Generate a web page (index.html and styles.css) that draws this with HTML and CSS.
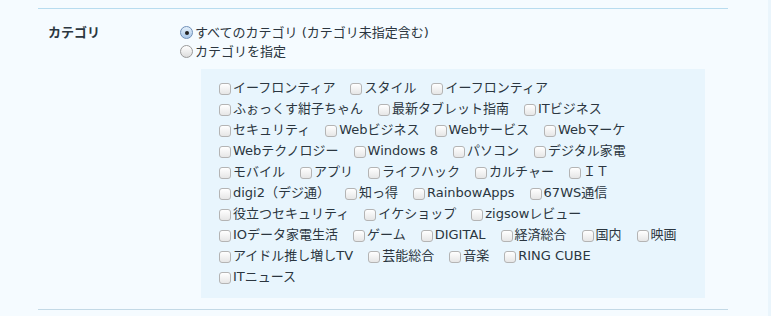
FILE: index.html
```html
<!DOCTYPE html>
<html lang="ja">
<head>
    <meta charset="UTF-8">
    <title>カテゴリ</title>
    <link rel="stylesheet" href="styles.css">
</head>
<body>
    <div class="page">
        <div class="section">
            <div class="section-label">カテゴリ</div>
            <div class="section-body">
                <label class="radio-row"><input type="radio" name="cat" checked> すべてのカテゴリ (カテゴリ未指定含む)</label>
                <label class="radio-row"><input type="radio" name="cat"> カテゴリを指定</label>
                <div class="cat-box">
                    <label class="cat"><input type="checkbox">イーフロンティア</label>
                    <label class="cat"><input type="checkbox">スタイル</label>
                    <label class="cat"><input type="checkbox">イーフロンティア</label>
                    <label class="cat"><input type="checkbox">ふぉっくす紺子ちゃん</label>
                    <label class="cat"><input type="checkbox">最新タブレット指南</label>
                    <label class="cat"><input type="checkbox">ITビジネス</label>
                    <label class="cat"><input type="checkbox">セキュリティ</label>
                    <label class="cat"><input type="checkbox">Webビジネス</label>
                    <label class="cat"><input type="checkbox">Webサービス</label>
                    <label class="cat"><input type="checkbox">Webマーケ</label>
                    <label class="cat"><input type="checkbox">Webテクノロジー</label>
                    <label class="cat"><input type="checkbox">Windows 8</label>
                    <label class="cat"><input type="checkbox">パソコン</label>
                    <label class="cat"><input type="checkbox">デジタル家電</label>
                    <label class="cat"><input type="checkbox">モバイル</label>
                    <label class="cat"><input type="checkbox">アプリ</label>
                    <label class="cat"><input type="checkbox">ライフハック</label>
                    <label class="cat"><input type="checkbox">カルチャー</label>
                    <label class="cat"><input type="checkbox">ＩＴ</label>
                    <label class="cat"><input type="checkbox">digi2（デジ通）</label>
                    <label class="cat"><input type="checkbox">知っ得</label>
                    <label class="cat"><input type="checkbox">RainbowApps</label>
                    <label class="cat"><input type="checkbox">67WS通信</label>
                    <label class="cat"><input type="checkbox">役立つセキュリティ</label>
                    <label class="cat"><input type="checkbox">イケショップ</label>
                    <label class="cat"><input type="checkbox">zigsowレビュー</label>
                    <label class="cat"><input type="checkbox">IOデータ家電生活</label>
                    <label class="cat"><input type="checkbox">ゲーム</label>
                    <label class="cat"><input type="checkbox">DIGITAL</label>
                    <label class="cat"><input type="checkbox">経済総合</label>
                    <label class="cat"><input type="checkbox">国内</label>
                    <label class="cat"><input type="checkbox">映画</label>
                    <label class="cat"><input type="checkbox">アイドル推し増しTV</label>
                    <label class="cat"><input type="checkbox">芸能総合</label>
                    <label class="cat"><input type="checkbox">音楽</label>
                    <label class="cat"><input type="checkbox">RING CUBE</label>
                    <label class="cat"><input type="checkbox">ITニュース</label>
                </div>
            </div>
        </div>
    </div>
</body>
</html>
```

FILE: styles.css
```css
html, body { margin: 0; height: 100%; }
body {
  font-family: "DejaVu Sans", "Noto Sans CJK JP", sans-serif;
  font-size: 13px;
  color: #2b3640;
  background-color: #eaf5fc;
}
.page { width: 768px; min-height: 100%; background-color: #f5fbff; padding-top: 8px; box-sizing: border-box; }
.section {
  display: flex;
  margin-left: 38px;
  width: 690px;
  border-top: 1px solid #b8dcef;
  border-bottom: 1px solid #c3d9e6;
  padding: 14px 0 11px;
}
.section-label { width: 132px; padding-left: 10px; font-weight: bold; line-height: 19px; }
.section-body { flex: 1; }
.radio-row { display: flex; align-items: center; line-height: 19px; white-space: nowrap; }
.radio-row input {
  appearance: none;
  width: 13px; height: 13px; margin: 0 2px 0 0;
  border: 1px solid #9a9a9a; border-radius: 50%;
  background: linear-gradient(#ffffff, #dcdcdc);
  box-sizing: border-box;
  display: grid; place-items: center;
}
.radio-row input:checked { border-color: #6f8fb8; background: linear-gradient(#e4f0fb, #a9c8ea); }
.radio-row input:checked::after { content: ""; width: 4px; height: 4px; border-radius: 50%; background: #222; }
.cat-box {
  margin: 8px 0 0 21px;
  width: 504px;
  box-sizing: border-box;
  padding: 8px 26px 11px 18px;
  background-color: #e8f5fd;
  display: flex;
  flex-wrap: wrap;
  column-gap: 15px;
}
.cat { display: flex; align-items: center; line-height: 21px; white-space: nowrap; }
.cat input {
  appearance: none;
  width: 12px; height: 12px; margin: 3px 2px 0 0;
  border: 1px solid #b4b4b4; border-radius: 3px;
  background: linear-gradient(#ffffff, #e6e6e6);
  box-sizing: border-box;
}
```
